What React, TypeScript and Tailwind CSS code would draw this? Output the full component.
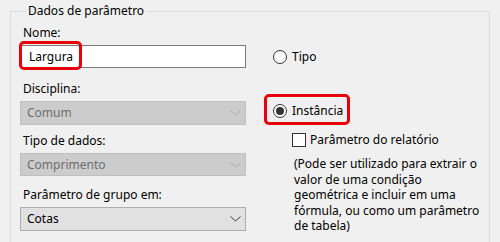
const Chevron = ({ color }: { color: string }) => (
  <svg width="11" height="6" viewBox="0 0 11 6" className="shrink-0">
    <polyline points="0.5,0.5 5.5,5 10.5,0.5" fill="none" stroke={color} strokeWidth="1" />
  </svg>
);

const Select = ({ value, disabled, className = '' }: { value: string; disabled?: boolean; className?: string }) => (
  <div
    className={
      disabled
        ? `flex items-center justify-between border border-[#bfbfbf] bg-[#cccccc] pl-[6px] pr-[4px] text-[#6d6d6d] ${className}`
        : `flex items-center justify-between border border-[#adadad] bg-[#e1e1e1] pl-[6px] pr-[4px] text-black ${className}`
    }
  >
    <span>{value}</span>
    <Chevron color={disabled ? '#a8a8a8' : '#3c3c3c'} />
  </div>
);

const Radio = ({ checked }: { checked?: boolean }) => (
  <span className="flex h-[14px] w-[14px] shrink-0 items-center justify-center rounded-full border border-[#333333] bg-white">
    {checked && <span className="h-[8px] w-[8px] rounded-full bg-[#333333]" />}
  </span>
);

export default function App() {
  return (
    <div className="h-[242px] w-[500px] overflow-hidden bg-[#f0f0f0] pt-[3px] font-['Segoe_UI','Noto_Sans',sans-serif] text-[12px] leading-[16px] text-black">
      <fieldset className="mx-[10px] border border-[#dcdcdc] pb-[30px] pl-[9px]">
        <legend className="ml-[6px] px-[2px] leading-[16px]">Dados de parâmetro</legend>

        <div className="mt-[6px] flex">
          {/* Left column */}
          <div className="flex w-[226px] flex-col">
            <label className="ml-[3px] h-[16px]">Nome:</label>
            <div className="relative mt-[4px]">
              <div className="flex h-[23px] items-center border border-[#7a7a7a] bg-white pl-[8px]">Largura</div>
              <div className="absolute left-[-1px] top-[-4px] h-[29px] w-[63px] rounded-[5px] border-[3px] border-[#e8000b]" />
            </div>

            <label className="ml-[3px] mt-[13px] h-[16px]">Disciplina:</label>
            <Select value="Comum" disabled className="mt-[4px] h-[24px]" />

            <label className="ml-[3px] mt-[8px] h-[16px]">Tipo de dados:</label>
            <Select value="Comprimento" disabled className="mt-[4px] h-[23px]" />

            <label className="ml-[3px] mt-[11px] h-[16px]">Parâmetro de grupo em:</label>
            <Select value="Cotas" className="mt-[4px] h-[24px]" />
          </div>

          {/* Right column */}
          <div className="ml-[18px] flex flex-col">
            <div className="mt-[24px] flex h-[16px] items-center gap-[5px] pl-[9px]">
              <Radio />
              <span>Tipo</span>
            </div>

            <div className="mt-[29px] flex h-[31px] w-[86px] items-center gap-[5px] rounded-[5px] border-[3px] border-[#e8000b] pl-[6px] pt-[2px]">
              <Radio checked />
              <span>Instância</span>
            </div>

            <div className="ml-[28px] mt-[7px] flex h-[15px] items-center gap-[4px]">
              <span className="h-[14px] w-[14px] shrink-0 border border-[#333333] bg-white" />
              <span>Parâmetro do relatório</span>
            </div>

            <p className="ml-[30px] mt-[9px] leading-[15.5px]">
              (Pode ser utilizado para extrair o
              <br />
              valor de uma condição
              <br />
              geométrica e incluir em uma
              <br />
              fórmula, ou como um parâmetro
              <br />
              de tabela)
            </p>
          </div>
        </div>
      </fieldset>
    </div>
  );
}
